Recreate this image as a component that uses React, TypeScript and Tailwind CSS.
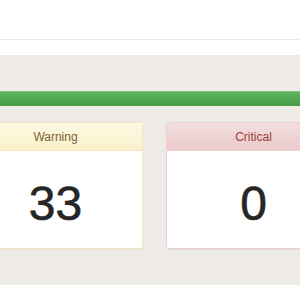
import React from "react";

export default function App() {
  return (
    <div className="w-[300px] h-[300px] overflow-hidden bg-white" style={{ fontFamily: '"Liberation Sans", Arial, sans-serif' }}>
      <div className="h-[39px] bg-white" />
      <div className="h-px bg-[#e9e9e9]" />
      <div className="h-[15px] bg-white" />
      <div className="h-[230px] bg-[#eeeae5] pt-[36px] overflow-hidden">
        <div className="h-[15px] bg-gradient-to-b from-[#5db55d] to-[#469d46] border-t border-[#7cc27c]" />
        <div className="flex gap-[23px] ml-[-32px] mt-[16px]">
          <div className="w-[175px] shrink-0 bg-white border border-[#f7e6c3] rounded-[3px] shadow-[0_1px_1px_rgba(0,0,0,0.05)]">
            <div className="h-[28px] bg-gradient-to-b from-[#fcf8e3] to-[#faf1c9] border-b border-[#f7e6c3] flex items-center justify-center text-[12px] text-[#7d6235]">
              Warning
            </div>
            <div className="h-[97px] flex items-center justify-center pt-[8px] text-[48px] leading-none text-[#262626] [-webkit-text-stroke:0.6px_#262626]">
              33
            </div>
          </div>
          <div className="w-[175px] shrink-0 bg-white border border-[#ebcfd3] rounded-[3px] shadow-[0_1px_1px_rgba(0,0,0,0.05)]">
            <div className="h-[28px] bg-gradient-to-b from-[#f2dede] to-[#ebcaca] border-b border-[#ebcfd3] flex items-center justify-center text-[12px] text-[#a03c3a]">
              Critical
            </div>
            <div className="h-[97px] flex items-center justify-center pt-[8px] text-[48px] leading-none text-[#262626] [-webkit-text-stroke:0.6px_#262626]">
              0
            </div>
          </div>
        </div>
      </div>
      <div className="h-[15px] bg-white" />
    </div>
  );
}
